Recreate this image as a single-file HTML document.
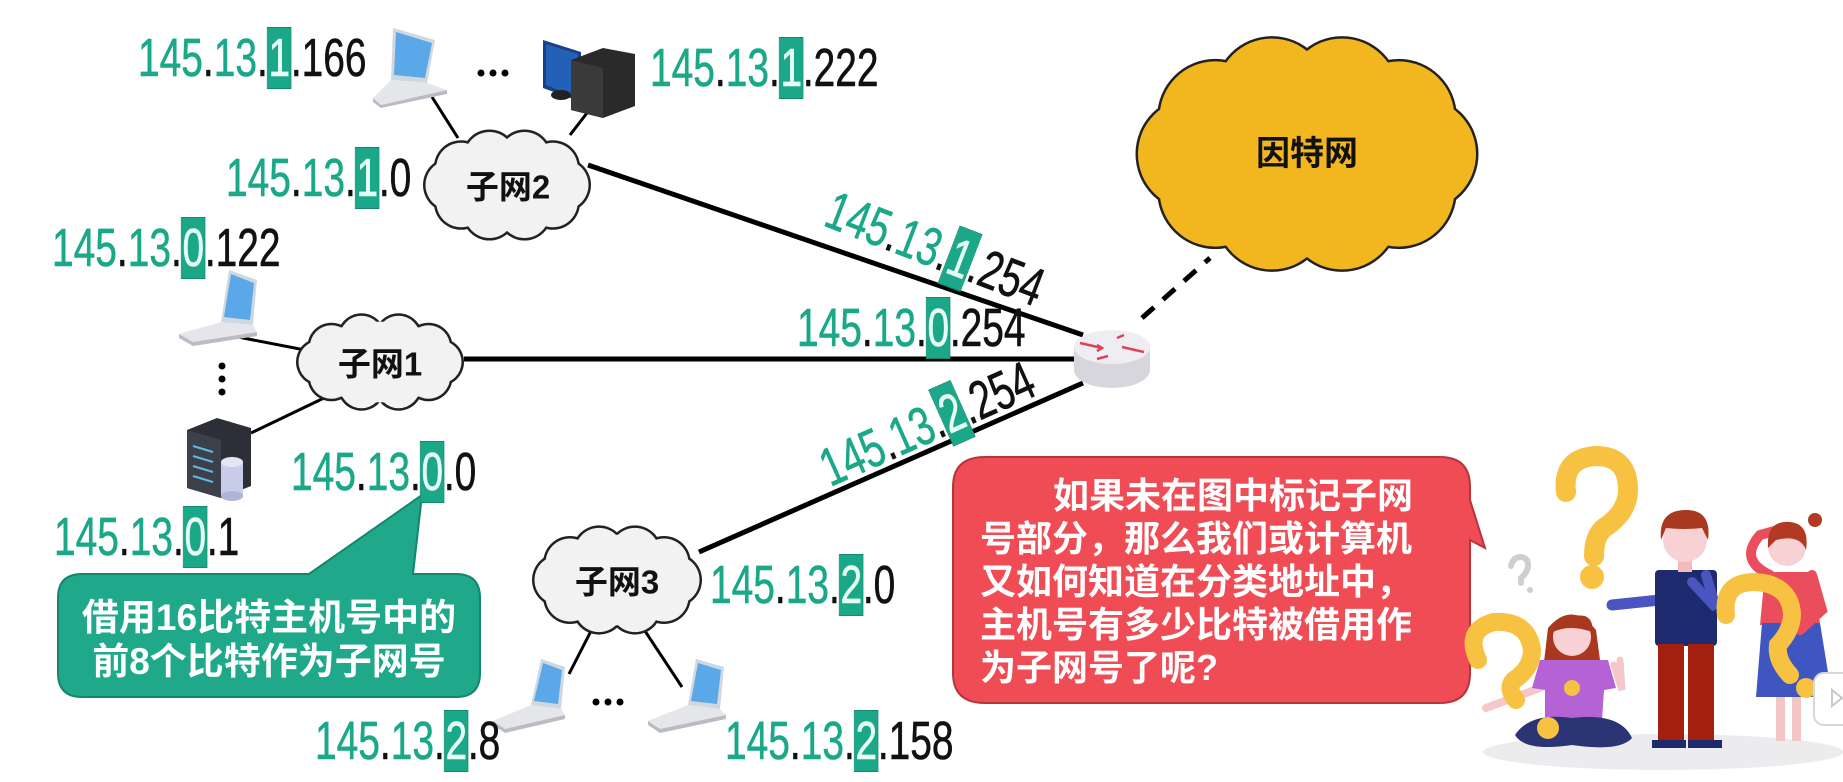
<!DOCTYPE html>
<html><head><meta charset="utf-8">
<style>
html,body{margin:0;padding:0;background:#fff;}
body{width:1843px;height:782px;position:relative;overflow:hidden;font-family:"Liberation Sans","Noto Sans CJK SC",sans-serif;}
svg.bg{position:absolute;left:0;top:0;}
.ip{position:absolute;font:54px/1 "Liberation Sans",sans-serif;transform:scaleX(.72);transform-origin:0 0;white-space:nowrap;color:#111;-webkit-text-stroke:0.6px currentColor;}
.ip i{font-style:normal;color:#1aa889;}
.ip b{font-weight:normal;background:#1aa889;color:#e6fbf4;padding:0 1px;box-shadow:0 0 0 1px #138a70;-webkit-text-stroke:0.6px #e6fbf4;}
.cl{position:absolute;font:bold 33px/1 "Liberation Sans","Noto Sans CJK SC",sans-serif;color:#111;white-space:nowrap;transform:translate(-50%,-50%);}
.red{position:absolute;left:980px;top:474px;width:440px;font:bold 36px/43px "Liberation Sans","Noto Sans CJK SC",sans-serif;color:#fff;}
.grn{position:absolute;left:58px;top:596px;width:422px;text-align:center;font:bold 37px/44px "Liberation Sans","Noto Sans CJK SC",sans-serif;color:#fff;}
</style></head><body>
<svg class="bg" width="1843" height="782" viewBox="0 0 1843 782">
<g stroke="#000" stroke-width="5" fill="none">
<line x1="588" y1="165" x2="1083" y2="335"/>
<line x1="464" y1="359" x2="1075" y2="359"/>
<line x1="699" y1="552" x2="1083" y2="383"/>
<line x1="1142" y1="318" x2="1210" y2="258" stroke-dasharray="16,12"/>
</g>
<g stroke="#000" stroke-width="3">
<line x1="432" y1="97" x2="458" y2="138"/>
<line x1="587" y1="113" x2="570" y2="135"/>
<line x1="238" y1="337" x2="305" y2="350"/>
<line x1="251" y1="433" x2="324" y2="398"/>
<line x1="591" y1="631" x2="569" y2="674"/>
<line x1="643" y1="628" x2="682" y2="687"/>
</g>
<g id="clouds"></g>
<path d="M1074 347 L1074 370 A38 18 0 0 0 1150 370 L1150 347 Z" fill="#d6d6dc"/>
<ellipse cx="1112" cy="347" rx="38" ry="17" fill="#eeeef2"/>
<g stroke="#e0415a" stroke-width="2.5" fill="none">
<path d="M1080 343 L1102 348 M1097 345 L1102 348 L1097 351"/>
<path d="M1144 352 L1122 347"/>
<path d="M1108 356 L1097 359"/>
<path d="M1117 338 L1124 335"/>
</g>
<g transform="translate(373,28)">
<polygon points="20,0 62,12 54,55 18,52" fill="#cfd8e0"/>
<polygon points="23,4 59,15 52,50 21,47" fill="#5aa8e8"/>
<polygon points="18,52 54,55 74,62 8,77 0,70" fill="#e4e6ea"/>
<polygon points="0,70 8,77 74,62 74,66 8,80 0,74" fill="#b9bcc2"/>
</g>
<g transform="translate(543,40)">
<polygon points="0,0 38,12 38,62 0,48" fill="#1b3f88"/>
<polygon points="3,4 35,14 35,58 3,45" fill="#2360b8"/>
<ellipse cx="18" cy="55" rx="10" ry="5" fill="#222"/>
<polygon points="28,20 60,8 92,14 92,66 60,78 28,70" fill="#2a2a2a"/>
<polygon points="28,20 60,28 60,78 28,70" fill="#3a3a3a"/>
</g>
<g transform="translate(179,270)">
<polygon points="50,0 78,10 74,55 42,52" fill="#cfd8e0"/>
<polygon points="52,4 75,13 71,50 45,47" fill="#5aa8e8"/>
<polygon points="42,52 74,55 78,62 14,72 0,64" fill="#e4e6ea"/>
<polygon points="0,64 14,72 78,62 78,66 14,76 0,68" fill="#b9bcc2"/>
</g>
<g fill="#000"><circle cx="222" cy="366" r="3.5"/><circle cx="222" cy="379" r="3.5"/><circle cx="222" cy="392" r="3.5"/></g>
<g transform="translate(187,418)">
<polygon points="0,12 30,0 64,10 64,68 34,80 0,70" fill="#2c2f36"/>
<polygon points="0,12 34,22 34,80 0,70" fill="#3c4049"/>
<g stroke="#5fb8e8" stroke-width="2"><line x1="6" y1="28" x2="26" y2="34"/><line x1="6" y1="38" x2="26" y2="44"/><line x1="6" y1="48" x2="26" y2="54"/><line x1="6" y1="58" x2="26" y2="64"/></g>
<rect x="34" y="44" width="22" height="34" fill="#c8cce8"/>
<ellipse cx="45" cy="44" rx="11" ry="5" fill="#e4e6f6"/>
<ellipse cx="45" cy="78" rx="11" ry="5" fill="#aeb3d8"/>
</g>
<g transform="translate(493,659)">
<polygon points="48,0 72,8 68,50 38,46" fill="#cfd8e0"/>
<polygon points="50,4 69,11 65,45 41,42" fill="#5aa8e8"/>
<polygon points="38,46 68,50 72,56 12,70 0,62" fill="#e4e6ea"/>
<polygon points="0,62 12,70 72,56 72,60 12,74 0,66" fill="#b9bcc2"/>
</g>
<g transform="translate(648,659)">
<polygon points="48,0 76,8 72,50 40,46" fill="#cfd8e0"/>
<polygon points="50,4 73,11 69,45 43,42" fill="#5aa8e8"/>
<polygon points="40,46 72,50 78,56 12,70 0,62" fill="#e4e6ea"/>
<polygon points="0,62 12,70 78,56 78,60 12,74 0,66" fill="#b9bcc2"/>
</g>
<g fill="#000"><circle cx="481" cy="73" r="3.5"/><circle cx="493" cy="73" r="3.5"/><circle cx="505" cy="73" r="3.5"/>
<circle cx="596" cy="702" r="3.5"/><circle cx="608" cy="702" r="3.5"/><circle cx="620" cy="702" r="3.5"/></g>
<path d="M82 574 L309 574 L422 495 L413 574 L456 574 Q480 574 480 598 L480 673 Q480 697 456 697 L82 697 Q58 697 58 673 L58 598 Q58 574 82 574 Z" fill="#1fa98a" stroke="#15856c" stroke-width="2"/>
<path d="M985 457 L1440 457 Q1470 457 1470 487 L1470 500 L1485 548 L1470 540 L1470 673 Q1470 703 1440 703 L985 703 Q953 703 953 673 L953 487 Q953 457 985 457 Z" fill="#ef4c55" stroke="#b8343c" stroke-width="2"/>
<ellipse cx="1663" cy="752" rx="180" ry="18" fill="#ececee"/>
<path d="M1566 492 Q1562 458 1596 456 Q1628 456 1628 490 Q1628 512 1604 528 Q1594 536 1594 556" stroke="#f7c142" stroke-width="20" fill="none" stroke-linecap="round"/>
<circle cx="1592" cy="577" r="12" fill="#f7c142"/>
<path d="M1511 566 Q1513 557 1521 557 Q1529 558 1528 567 Q1526 574 1521 578 L1521 583" stroke="#cfcfd3" stroke-width="6" fill="none" stroke-linecap="round"/>
<circle cx="1530" cy="590" r="3" fill="#cfcfd3"/>
<path d="M1540 688 L1486 708" stroke="#f4c8c8" stroke-width="8" stroke-linecap="round"/>
<path d="M1614 665 L1622 690 L1620 660" stroke="#f4c8c8" stroke-width="7" fill="none" stroke-linecap="round"/>
<path d="M1548 628 Q1572 600 1596 630 L1600 660 L1544 662 Z" fill="#a8391f"/>
<circle cx="1572" cy="637" r="19" fill="#f8d1d4"/>
<path d="M1553 632 Q1560 612 1585 616 Q1594 620 1592 632 Q1570 624 1553 632Z" fill="#a8391f"/>
<path d="M1540 660 L1608 660 L1616 688 L1604 690 L1602 720 L1545 720 L1545 690 L1532 688 Z" fill="#b462d6"/>
<circle cx="1572" cy="688" r="8" fill="#f7c142"/>
<path d="M1515 735 Q1530 712 1572 718 Q1620 712 1632 738 Q1620 752 1572 745 Q1525 752 1515 735 Z" fill="#2b3475"/>
<path d="M1478 660 Q1464 630 1494 622 Q1528 620 1532 650 Q1532 668 1514 680 Q1506 688 1516 700" stroke="#f7c142" stroke-width="18" fill="none" stroke-linecap="round"/>
<circle cx="1548" cy="728" r="11" fill="#f7c142"/>
<path d="M1660 600 L1612 605" stroke="#4a55c0" stroke-width="11" stroke-linecap="round"/>
<rect x="1655" y="570" width="62" height="76" fill="#1d2a6e" rx="4"/>
<path d="M1706 575 L1716 608 L1692 582" stroke="#4a55c0" stroke-width="10" fill="none" stroke-linecap="round"/>
<rect x="1658" y="644" width="26" height="100" fill="#a3200f"/>
<rect x="1688" y="644" width="26" height="100" fill="#a3200f"/>
<rect x="1652" y="740" width="34" height="8" fill="#1d2a6e"/>
<rect x="1688" y="740" width="34" height="8" fill="#1d2a6e"/>
<rect x="1678" y="556" width="14" height="16" fill="#f4b9bd"/>
<circle cx="1685" cy="540" r="22" fill="#f8d1d4"/>
<path d="M1661 540 Q1658 510 1686 510 Q1712 510 1708 540 L1702 528 Q1685 530 1666 528 Z" fill="#a8391f"/>
<rect x="1776" y="697" width="9" height="44" fill="#f4c5c5"/>
<rect x="1792" y="697" width="9" height="44" fill="#f4c5c5"/>
<path d="M1765 572 L1815 572 L1820 625 L1760 625 Z" fill="#ea4d5b"/>
<path d="M1762 623 L1820 623 L1832 697 L1756 697 Z" fill="#3f55c0"/>
<path d="M1770 575 Q1738 560 1760 535 L1778 530" stroke="#ea4d5b" stroke-width="10" fill="none" stroke-linecap="round"/>
<path d="M1812 575 L1822 610 L1800 630" stroke="#ea4d5b" stroke-width="10" fill="none" stroke-linecap="round"/>
<circle cx="1787" cy="547" r="19" fill="#f8d1d4"/>
<path d="M1768 548 Q1766 520 1790 522 Q1810 524 1806 550 Q1800 534 1776 540 Z" fill="#b33a22"/>
<circle cx="1815" cy="520" r="7" fill="#b33a22"/>
<path d="M1726 615 Q1722 582 1755 582 Q1790 584 1792 614 Q1792 630 1778 645 Q1776 660 1790 675" stroke="#f7c142" stroke-width="18" fill="none" stroke-linecap="round"/>
<circle cx="1806" cy="688" r="10" fill="#f7c142"/>
<rect x="1814" y="673" width="40" height="52" rx="10" fill="#fff" stroke="#d8d8dc" stroke-width="2"/>
<path d="M1832 690 L1842 698 L1832 706 Z" fill="none" stroke="#c8c8cc" stroke-width="2"/>
</svg>

<div class="cl" style="left:1307px;top:154px;font-size:34px">因特网</div>
<div class="cl" style="left:508px;top:187px">子网2</div>
<div class="cl" style="left:380px;top:364px">子网1</div>
<div class="cl" style="left:617px;top:582px">子网3</div>

<div class="ip" style="left:138px;top:31px"><i>145</i>.<i>13</i>.<b>1</b>.166</div>
<div class="ip" style="left:650px;top:41px"><i>145</i>.<i>13</i>.<b>1</b>.222</div>
<div class="ip" style="left:226px;top:151px"><i>145</i>.<i>13</i>.<b>1</b>.0</div>
<div class="ip" style="left:52px;top:221px"><i>145</i>.<i>13</i>.<b>0</b>.122</div>
<div class="ip" style="left:291px;top:445px"><i>145</i>.<i>13</i>.<b>0</b>.0</div>
<div class="ip" style="left:54px;top:510px"><i>145</i>.<i>13</i>.<b>0</b>.1</div>
<div class="ip" style="left:710px;top:558px"><i>145</i>.<i>13</i>.<b>2</b>.0</div>
<div class="ip" style="left:315px;top:714px"><i>145</i>.<i>13</i>.<b>2</b>.8</div>
<div class="ip" style="left:725px;top:714px"><i>145</i>.<i>13</i>.<b>2</b>.158</div>
<div class="ip" style="left:797px;top:301px"><i>145</i>.<i>13</i>.<b>0</b>.254</div>
<div class="ip" style="left:838px;top:183px;transform:rotate(21deg) scaleX(.72)"><i>145</i>.<i>13</i>.<b>1</b>.254</div>
<div class="ip" style="left:812px;top:446px;transform:rotate(-24deg) scaleX(.72)"><i>145</i>.<i>13</i>.<b>2</b>.254</div>

<div class="grn">借用16比特主机号中的<br>前8个比特作为子网号</div>
<div class="red"><span style="padding-left:73px"></span>如果未在图中标记子网<br>号部分，那么我们或计算机<br>又如何知道在分类地址中，<br>主机号有多少比特被借用作<br>为子网号了呢?</div>

<script>
(function(){
var g=document.getElementById('clouds');var ns='http://www.w3.org/2000/svg';
var cs=[[1307,154,343,242,'#f2b71f'],[507,185,168,114,'#f2f2f2'],[380,362,168,100,'#f2f2f2'],[617,580,170,112,'#f2f2f2']];
var A=[0,36,72,108,144,180,216,252,288,324];
function add(tag,at){var e=document.createElementNS(ns,tag);for(var k in at)e.setAttribute(k,at[k]);g.appendChild(e);}
cs.forEach(function(c){
 var r=c[3]*0.24, rx=c[2]/2-r, ry=c[3]/2-r;
 var pts=A.map(function(a){a=a*Math.PI/180;return [c[0]+rx*Math.cos(a),c[1]+ry*Math.sin(a)];});
 pts.forEach(function(p){add('circle',{cx:p[0],cy:p[1],r:r,fill:'#222'});});
 pts.forEach(function(p){add('circle',{cx:p[0],cy:p[1],r:r-2.5,fill:c[4]});});
 add('ellipse',{cx:c[0],cy:c[1],rx:rx+r*0.6,ry:ry+r*0.6,fill:c[4]});
});
})();
</script>
</body></html>
